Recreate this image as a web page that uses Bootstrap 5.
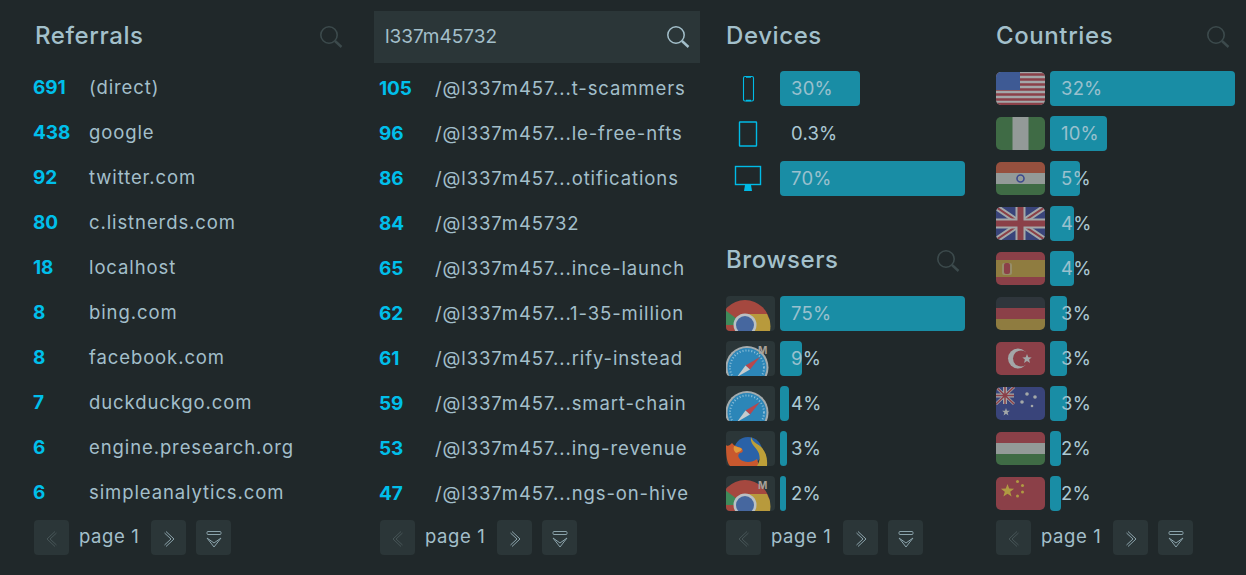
<!DOCTYPE html>
<html lang="en">

<head>
	<meta charset="utf-8">
	<meta name="viewport" content="width=device-width, initial-scale=1">
	<title>Stats</title>
	<link href="https://cdn.jsdelivr.net/npm/bootstrap@5.3.5/dist/css/bootstrap.min.css" rel="stylesheet">
	<style>
		html, body { height: 100%; }
		body { background: #20282a; color: #a3bfca; font-family: Inter, "Liberation Sans", sans-serif; font-size: 18.5px; overflow: hidden; }
		.board { height: 555px; padding: 11px 11px 0 34px; }
		.board section { display: flex; flex-direction: column; }
		.pane-ref { width: 338px; }
		.pane-pages { width: 350px; }
		.pane-dev { width: 270px; }
		.pane-geo { width: 239px; }
		.head { height: 48px; padding-top: 3px; flex: none; }
		.head h2 { font-family: inherit; font-size: 24px; font-weight: 500; margin: 0; color: #a3c0cb; letter-spacing: .6px; }
		.head svg { width: 24px; height: 24px; fill: none; stroke: #3c4a4c; stroke-width: 1.6; }
		.pane-ref .head { padding-right: 29px; padding-left: 1px; }
		.searchbox { height: 52px; width: 326px; margin-left: -6px; background: #2b3638; padding: 0 10px 0 11px; font-size: 19px; flex: none; }
		.searchbox svg { width: 24px; height: 24px; fill: none; stroke: #a3bfca; stroke-width: 1.5; }
		.rows { margin-top: 6px; height: 449px; }
		.pane-pages .rows { margin-top: 3px; }
		.pane-dev .rows, .pane-geo .rows { margin-top: 12px; }
		.link-row { height: 45px; white-space: nowrap; letter-spacing: .9px; }
		.link-row b { width: 55px; margin-left: -1px; margin-right: 1px; padding-top: 2px; color: #00bfea; font-weight: 700; font-size: 19px; letter-spacing: -.1px; flex: none; }
		.bar-row { height: 45px; padding: 0; }
		.tile { width: 49px; height: 35px; flex: none; margin-right: 5px; background: #2b3638; border-radius: 4px; overflow: hidden; display: block; }
		.tile-plain { background: none; }
		.tile-flag { background: none; height: 33px; margin-top: 1px; border-radius: 5px; }
		.track { flex: 1; height: 35px; position: relative; }
		.fill { position: absolute; left: 0; top: 0; height: 35px; background: #1a8ea5; border-radius: 4px; }
		.fill::after { content: ""; position: absolute; inset: 0; z-index: 2; background: rgba(26, 142, 165, .12); border-radius: 4px; }
		.pct { position: absolute; left: 11px; top: 0; z-index: 1; line-height: 35px; letter-spacing: .2px; color: #abc8d4; }
		.pane-dev .sp { height: 29px; }
		.pane-dev .head, .pane-geo .head { padding-right: 5px; }
		.first-bar { margin-top: 13px; }
		.pager { height: 35px; margin-top: auto; flex: none; }
		.pg { width: 35px; height: 35px; background: #2b3638; border-radius: 4px; padding: 0; border: 0; }
		.pg svg { width: 20px; height: 20px; fill: none; stroke: #8ba3ab; stroke-width: 1; }
		.pg.off svg { stroke: #475557; }
		.pg-label { width: 82px; padding-left: 10px; font-size: 18.5px; letter-spacing: .6px; margin-top: -2px; }
		.gap-next { margin-left: 10px; }
		.ic { fill: none; stroke: #00bbe6; stroke-width: 1.4; }
		.ic-thin { stroke-width: 1.1; }
	</style>
</head>

<body>
	<svg width="0" height="0" class="d-block">
		<defs>
			<symbol id="mag" viewBox="0 0 24 24"><circle cx="10" cy="10" r="8.2"/><path d="M16 16l6.5 6" stroke-width="2.4"/></symbol>
			<symbol id="prev" viewBox="0 0 20 20"><path d="M13 2.500L5 10l8 7.500M14.500 4L8 10l6.500 6"/></symbol>
			<symbol id="next" viewBox="0 0 20 20"><path d="M7 2.500l8 7.500-8 7.500M5.500 4L12 10l-6.500 6"/></symbol>
			<symbol id="more" viewBox="0 0 20 20"><rect x="3" y="2.500" width="14" height="3" rx="1"/><path d="M3 9l7 5 7-5M3 9l7 9 7-9"/></symbol>
			<symbol id="chrome" viewBox="0 0 49 35">
				<circle cx="19" cy="29" r="25" fill="#a5483f"/>
				<path d="M19 29L-6 29A25 25 0 0 1 -1 14z" fill="#3f8a5a"/>
				<path d="M19 29L43 22A25 25 0 0 1 44 35L19 35z" fill="#b89a3c"/>
				<path d="M19 18H41A25 25 0 0 1 44 29L19 29z" fill="#b89a3c"/>
				<circle cx="19" cy="29" r="11.500" fill="#b9c0c4"/>
				<circle cx="19" cy="29" r="9" fill="#46679f"/>
			</symbol>
			<symbol id="safari" viewBox="0 0 49 35">
				<circle cx="21" cy="26.500" r="21.500" fill="#a4acae"/>
				<circle cx="21" cy="26.500" r="19.500" fill="#2c86b8"/>
				<circle cx="21" cy="26.500" r="17" fill="none" stroke="#8fc0da" stroke-width="2" stroke-dasharray="1 2"/>
				<path d="M34 16L24 28.500 19.500 24.500z" fill="#b8474c"/>
				<path d="M19.500 24.500L24 28.500 11 36z" fill="#c5cbcd"/>
			</symbol>
			<symbol id="firefox" viewBox="0 0 49 35">
				<circle cx="22" cy="20" r="14" fill="#2a62a8"/>
				<path d="M0 14C2 16 4 14 6 12 8 15 12 16 15 17 18 19 17 22 14 22 11 24 12 28 17 30 22 32 27 31 31 28L33 35H4C1 32 0 25 0 14z" fill="#c8582e"/>
				<path d="M8 15c3 1 6 1 8 3-1 3-4 3-6 4-2-2-3-4-2-7z" fill="#e0983a"/>
				<path d="M25 6C26 9 28 11 31 13 38 17 42 24 41 35H31C35 29 34 23 31 19 28 15 24 12 25 6z" fill="#bd9f38"/>
			</symbol>
		</defs>
	</svg>

	<div class="board d-flex">
		<section class="pane-ref">
			<div class="head d-flex align-items-center justify-content-between">
				<h2>Referrals</h2>
				<svg><use href="#mag"/></svg>
			</div>
			<div class="rows">
				<div class="link-row d-flex align-items-center"><b>691</b><span>(direct)</span></div>
				<div class="link-row d-flex align-items-center"><b>438</b><span>google</span></div>
				<div class="link-row d-flex align-items-center"><b>92</b><span>twitter.com</span></div>
				<div class="link-row d-flex align-items-center"><b>80</b><span>c.listnerds.com</span></div>
				<div class="link-row d-flex align-items-center"><b>18</b><span>localhost</span></div>
				<div class="link-row d-flex align-items-center"><b>8</b><span>bing.com</span></div>
				<div class="link-row d-flex align-items-center"><b>8</b><span>facebook.com</span></div>
				<div class="link-row d-flex align-items-center"><b>7</b><span>duckduckgo.com</span></div>
				<div class="link-row d-flex align-items-center"><b>6</b><span>engine.presearch.org</span></div>
				<div class="link-row d-flex align-items-center"><b>6</b><span>simpleanalytics.com</span></div>
			</div>
			<div class="pager d-flex align-items-center">
				<button class="pg off"><svg><use href="#prev"/></svg></button>
				<span class="pg-label">page 1</span>
				<button class="pg"><svg><use href="#next"/></svg></button>
				<button class="pg gap-next"><svg><use href="#more"/></svg></button>
			</div>
		</section>

		<section class="pane-pages ps-1 ms-1">
			<div class="searchbox d-flex align-items-center justify-content-between">
				<span>l337m45732</span>
				<svg><use href="#mag"/></svg>
			</div>
			<div class="rows">
				<div class="link-row d-flex align-items-center"><b>105</b><span>/@l337m457...t-scammers</span></div>
				<div class="link-row d-flex align-items-center"><b>96</b><span>/@l337m457...le-free-nfts</span></div>
				<div class="link-row d-flex align-items-center"><b>86</b><span>/@l337m457...otifications</span></div>
				<div class="link-row d-flex align-items-center"><b>84</b><span>/@l337m45732</span></div>
				<div class="link-row d-flex align-items-center"><b>65</b><span>/@l337m457...ince-launch</span></div>
				<div class="link-row d-flex align-items-center"><b>62</b><span>/@l337m457...1-35-million</span></div>
				<div class="link-row d-flex align-items-center"><b>61</b><span>/@l337m457...rify-instead</span></div>
				<div class="link-row d-flex align-items-center"><b>59</b><span>/@l337m457...smart-chain</span></div>
				<div class="link-row d-flex align-items-center"><b>53</b><span>/@l337m457...ing-revenue</span></div>
				<div class="link-row d-flex align-items-center"><b>47</b><span>/@l337m457...ngs-on-hive</span></div>
			</div>
			<div class="pager d-flex align-items-center">
				<button class="pg off"><svg><use href="#prev"/></svg></button>
				<span class="pg-label">page 1</span>
				<button class="pg"><svg><use href="#next"/></svg></button>
				<button class="pg gap-next"><svg><use href="#more"/></svg></button>
			</div>
		</section>

		<section class="pane-dev">
			<div class="head d-flex align-items-center justify-content-between" style="width:239px">
				<h2>Devices</h2>
			</div>
			<div class="rows" style="width:239px">
				<div class="bar-row d-flex">
					<svg class="tile tile-plain" viewBox="0 0 49 35"><rect class="ic ic-thin" x="17.500" y="5.500" width="10" height="24.500" rx="1.500"/><path class="ic" d="M20 6h5M20 29.500h5"/></svg>
					<div class="track"><div class="fill" style="width:43%"></div><span class="pct">30%</span></div>
				</div>
				<div class="bar-row d-flex">
					<svg class="tile tile-plain" viewBox="0 0 49 35"><rect class="ic" x="13.500" y="6" width="17" height="24" rx="0.500"/></svg>
					<div class="track"><span class="pct">0.3%</span></div>
				</div>
				<div class="bar-row d-flex">
					<svg class="tile tile-plain" viewBox="0 0 49 35"><rect class="ic" x="9.500" y="5.500" width="25" height="18"/><path d="M19 24h6l1 6h-8z" fill="#00bbe6"/></svg>
					<div class="track"><div class="fill" style="width:100%"></div><span class="pct">70%</span></div>
				</div>
				<div class="sp"></div>
				<div class="head d-flex align-items-center justify-content-between">
					<h2>Browsers</h2>
					<svg><use href="#mag"/></svg>
				</div>
				<div class="bar-row d-flex first-bar">
					<svg class="tile"><use href="#chrome"/></svg>
					<div class="track"><div class="fill" style="width:100%"></div><span class="pct">75%</span></div>
				</div>
				<div class="bar-row d-flex">
					<svg class="tile"><use href="#safari"/><text x="32" y="13" font-size="10" font-weight="700" fill="#a8a29a">M</text></svg>
					<div class="track"><div class="fill" style="width:12%"></div><span class="pct">9%</span></div>
				</div>
				<div class="bar-row d-flex">
					<svg class="tile"><use href="#safari"/></svg>
					<div class="track"><div class="fill" style="width:5%"></div><span class="pct">4%</span></div>
				</div>
				<div class="bar-row d-flex">
					<svg class="tile"><use href="#firefox"/></svg>
					<div class="track"><div class="fill" style="width:4%"></div><span class="pct">3%</span></div>
				</div>
				<div class="bar-row d-flex">
					<svg class="tile"><use href="#chrome"/><text x="32" y="13" font-size="10" font-weight="700" fill="#a8a29a">M</text></svg>
					<div class="track"><div class="fill" style="width:3%"></div><span class="pct">2%</span></div>
				</div>
			</div>
			<div class="pager d-flex align-items-center">
				<button class="pg off"><svg><use href="#prev"/></svg></button>
				<span class="pg-label">page 1</span>
				<button class="pg"><svg><use href="#next"/></svg></button>
				<button class="pg gap-next"><svg><use href="#more"/></svg></button>
			</div>
		</section>

		<section class="pane-geo">
			<div class="head d-flex align-items-center justify-content-between">
				<h2>Countries</h2>
				<svg><use href="#mag"/></svg>
			</div>
			<div class="rows">
				<div class="bar-row d-flex">
					<svg class="tile tile-flag" viewBox="0 0 49 33"><rect width="49" height="33" fill="#a3a7a8"/><path d="M0 2.500h49M0 7.500h49M0 12.500h49M0 17.500h49M0 22.500h49M0 27.500h49M0 32h49" stroke="#8b4048" stroke-width="2.500"/><rect width="24" height="18" fill="#3e5a94"/></svg>
					<div class="track"><div class="fill" style="width:100%"></div><span class="pct">32%</span></div>
				</div>
				<div class="bar-row d-flex">
					<svg class="tile tile-flag" viewBox="0 0 49 33"><rect width="49" height="33" fill="#3f6b45"/><rect x="16.500" width="16" height="33" fill="#939a98"/></svg>
					<div class="track"><div class="fill" style="width:31%"></div><span class="pct">10%</span></div>
				</div>
				<div class="bar-row d-flex">
					<svg class="tile tile-flag" viewBox="0 0 49 33"><rect width="49" height="11" fill="#96503e"/><rect y="11" width="49" height="11" fill="#939a98"/><rect y="22" width="49" height="11" fill="#3f6b45"/><circle cx="24.500" cy="16.500" r="3.500" fill="none" stroke="#3e4a8c" stroke-width="1.600"/></svg>
					<div class="track"><div class="fill" style="width:16%"></div><span class="pct">5%</span></div>
				</div>
				<div class="bar-row d-flex">
					<svg class="tile tile-flag" viewBox="0 0 49 33"><rect width="49" height="33" fill="#39447a"/><path d="M0 0L49 33M49 0L0 33" stroke="#a3a7a8" stroke-width="6"/><path d="M0 0L49 33M49 0L0 33" stroke="#8b4048" stroke-width="2"/><path d="M24.500 0v33M0 16.500h49" stroke="#a3a7a8" stroke-width="10"/><path d="M24.500 0v33M0 16.500h49" stroke="#8b4048" stroke-width="6"/></svg>
					<div class="track"><div class="fill" style="width:13%"></div><span class="pct">4%</span></div>
				</div>
				<div class="bar-row d-flex">
					<svg class="tile tile-flag" viewBox="0 0 49 33"><rect width="49" height="33" fill="#8b4048"/><rect y="8" width="49" height="17" fill="#8f7c40"/><rect x="6" y="11" width="10" height="12" rx="2" fill="#a3a7a8" opacity=".4"/><rect x="8" y="11" width="6" height="11" rx="2" fill="#8b4048"/></svg>
					<div class="track"><div class="fill" style="width:13%"></div><span class="pct">4%</span></div>
				</div>
				<div class="bar-row d-flex">
					<svg class="tile tile-flag" viewBox="0 0 49 33"><rect width="49" height="11" fill="#2f363c"/><rect y="11" width="49" height="11" fill="#8b4048"/><rect y="22" width="49" height="11" fill="#8f7c40"/></svg>
					<div class="track"><div class="fill" style="width:9%"></div><span class="pct">3%</span></div>
				</div>
				<div class="bar-row d-flex">
					<svg class="tile tile-flag" viewBox="0 0 49 33"><rect width="49" height="33" fill="#8b4048"/><circle cx="22" cy="16.500" r="10" fill="#a3a7a8"/><circle cx="25" cy="16.500" r="8" fill="#8b4048"/><path d="M31 12l1.300 3.200 3.400.2-2.600 2.200.9 3.400-3-1.900-3 1.900.9-3.400-2.600-2.200 3.400-.2z" fill="#a3a7a8"/></svg>
					<div class="track"><div class="fill" style="width:9%"></div><span class="pct">3%</span></div>
				</div>
				<div class="bar-row d-flex">
					<svg class="tile tile-flag" viewBox="0 0 49 33"><rect width="49" height="33" fill="#39447a"/><path d="M0 0L18 17M18 0L0 17" stroke="#a3a7a8" stroke-width="3"/><path d="M9 0v17M0 8.500h18" stroke="#a3a7a8" stroke-width="4"/><path d="M0 0L18 17M18 0L0 17M9 0v17M0 8.500h18" stroke="#8b4048" stroke-width="1.500"/><g fill="#a3a7a8"><path d="M10 21l1 2.700 2.900.1-2.300 1.800.8 2.800-2.400-1.600-2.400 1.600.8-2.800-2.300-1.800 2.900-.1z"/><circle cx="31" cy="7" r="1.800"/><circle cx="39" cy="10" r="1.800"/><circle cx="26" cy="15" r="1.800"/><circle cx="36" cy="19" r="1.300"/></g></svg>
					<div class="track"><div class="fill" style="width:9%"></div><span class="pct">3%</span></div>
				</div>
				<div class="bar-row d-flex">
					<svg class="tile tile-flag" viewBox="0 0 49 33"><rect width="49" height="11" fill="#8b4048"/><rect y="11" width="49" height="11" fill="#939a98"/><rect y="22" width="49" height="11" fill="#3f6b45"/></svg>
					<div class="track"><div class="fill" style="width:6%"></div><span class="pct">2%</span></div>
				</div>
				<div class="bar-row d-flex">
					<svg class="tile tile-flag" viewBox="0 0 49 33"><rect width="49" height="33" fill="#8b4048"/><path d="M11.500 7l1.700 4.600 4.900.2-3.900 3 1.400 4.700-4.100-2.700-4.100 2.700 1.400-4.700-3.900-3 4.900-.2z" fill="#b09a42"/><g fill="#b09a42"><circle cx="21.500" cy="4.500" r="1.500"/><circle cx="26.500" cy="8.500" r="1.500"/><circle cx="26.500" cy="15" r="1.500"/><circle cx="21.500" cy="19" r="1.500"/></g></svg>
					<div class="track"><div class="fill" style="width:6%"></div><span class="pct">2%</span></div>
				</div>
			</div>
			<div class="pager d-flex align-items-center">
				<button class="pg off"><svg><use href="#prev"/></svg></button>
				<span class="pg-label">page 1</span>
				<button class="pg"><svg><use href="#next"/></svg></button>
				<button class="pg gap-next"><svg><use href="#more"/></svg></button>
			</div>
		</section>
	</div>
	<script src="https://cdn.jsdelivr.net/npm/bootstrap@5.3.5/dist/js/bootstrap.bundle.min.js"></script>
</body>

</html>
